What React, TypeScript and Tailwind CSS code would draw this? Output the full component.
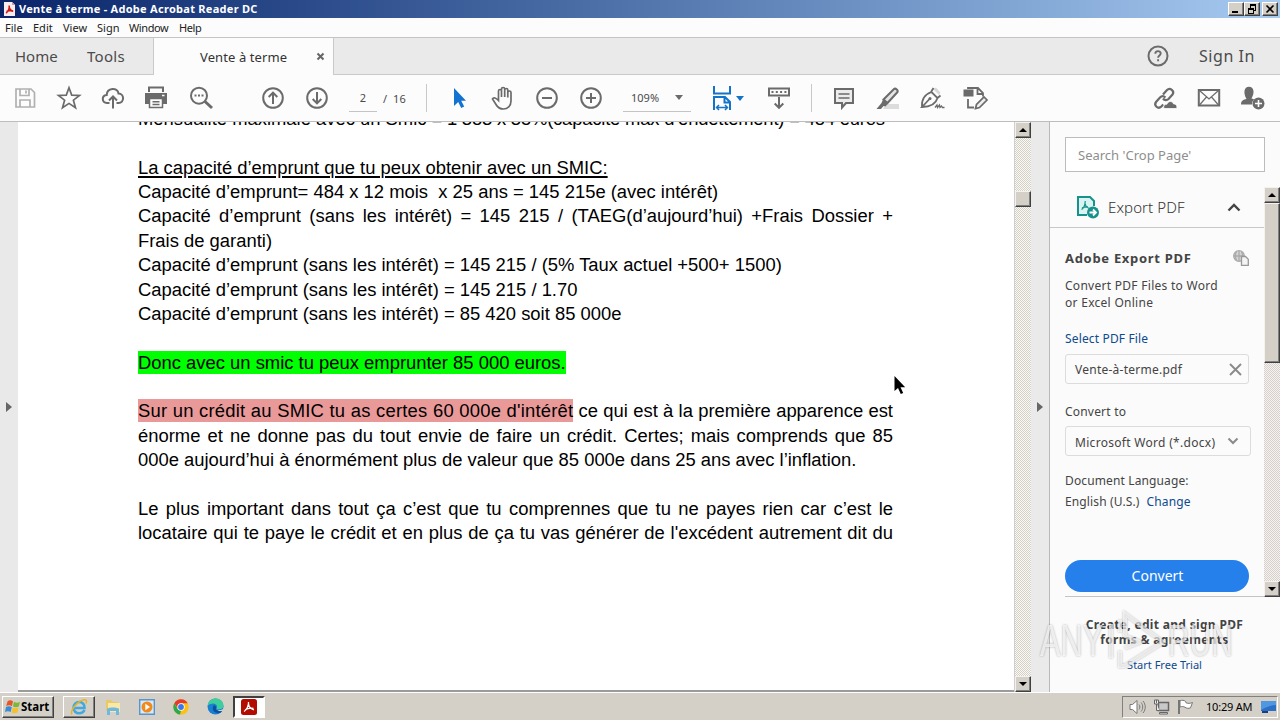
import type { ReactNode } from "react";

type IconProps = { children: ReactNode; w?: number; h?: number; vb?: string; className?: string };

function Icon({ children, w = 26, h = 26, vb = "0 0 26 26", className = "" }: IconProps) {
  return (
    <svg width={w} height={h} viewBox={vb} fill="none" stroke="#6b6b6b" strokeWidth="2" className={"shrink-0 " + className}>
      {children}
    </svg>
  );
}

function Slot({ children }: { children: ReactNode }) {
  return <div className="flex w-11 shrink-0 items-center justify-center">{children}</div>;
}

const raised = "border border-t-[#f4f2ee] border-r-[#404040] border-b-[#404040] border-l-[#f4f2ee] bg-[#d4d0c8] shadow-[inset_-1px_-1px_0_#808080]";

function ScrollButton({ down = false }: { down?: boolean }) {
  return (
    <div className={"flex h-4 w-full shrink-0 items-center justify-center " + raised}>
      <svg width="8" height="4" viewBox="0 0 8 4">
        <path d={down ? "M0 0h8L4 4z" : "M0 4h8L4 0z"} fill="#000" />
      </svg>
    </div>
  );
}

function WinButton({ children }: { children: ReactNode }) {
  return (
    <div className="flex h-[14px] w-4 items-center justify-center border border-t-white border-r-[#404040] border-b-[#404040] border-l-white bg-[#d4d0c8] shadow-[inset_-1px_-1px_0_#808080]">
      <svg width="14" height="12" viewBox="0 0 14 12" fill="none" stroke="#000" shapeRendering="crispEdges">
        {children}
      </svg>
    </div>
  );
}

function Line({ children, justify = false }: { children?: ReactNode; justify?: boolean }) {
  return (
    <p className={"h-[24.37px] w-[755px] leading-[24.37px] whitespace-pre" + (justify ? " [text-align-last:justify]" : "")}>{children}</p>
  );
}

function TitleBar() {
  return (
    <header className="flex h-[18px] shrink-0 items-center bg-linear-to-r from-[#0a246a] to-[#a6caf0] pr-[2px] pl-1">
      <svg width="11" height="14" viewBox="0 0 11 14" className="mr-1">
        <path d="M0 0h8l3 3v11H0z" fill="#f7eded" />
        <path d="M8 0l3 3H8z" fill="#d99" />
        <path d="M2 11c2-1 3.500-4.500 3.200-7.500M5.200 5c.5 2.500 2 4 4 4.300M2.500 9.500c2-.8 4-1.200 6-.8" stroke="#d11414" strokeWidth="1.500" fill="none" />
      </svg>
      <h1 className="-mt-px grow text-[11px] leading-none font-bold tracking-[0.28px] text-white">Vente à terme - Adobe Acrobat Reader DC</h1>
      <div className="flex">
        <WinButton><path d="M3 9h6" strokeWidth="2" /></WinButton>
        <WinButton>
          <path d="M5 2h6" strokeWidth="2" />
          <path d="M5.500 2v3M10.500 2v5.500H8M3.500 5v5.500h5V5" />
          <path d="M3 5.500h6" strokeWidth="2" />
        </WinButton>
        <div className="w-[2px]" />
        <WinButton><path d="M3.500 2.500l7 7M10.500 2.500l-7 7" strokeWidth="1.600" shapeRendering="auto" /></WinButton>
      </div>
    </header>
  );
}

function MenuBar() {
  return (
    <nav className="flex h-[19px] shrink-0 items-center bg-[#fcfcfc] pl-[5px] text-[11px] leading-none text-[#222]">
      <span className="w-7">File</span>
      <span className="w-[30px]">Edit</span>
      <span className="w-[34px]">View</span>
      <span className="w-8">Sign</span>
      <span className="w-[50px] tracking-[-0.4px]">Window</span>
      <span className="tracking-[-0.4px]">Help</span>
    </nav>
  );
}

function TabBar() {
  return (
    <div className="flex h-[38px] shrink-0 border-t border-[#c4c4c4] bg-[#eaeaea] leading-none text-[#4b4b4b]">
      <div className="flex w-[154px] items-center border-r border-b border-[#cacaca] pl-[15px] text-[15px]">
        <span className="w-[72px]">Home</span>
        <span className="tracking-[0.3px]">Tools</span>
      </div>
      <div className="flex w-[179px] items-center bg-[#fcfcfc] pt-px pl-[46px] text-[13px] text-[#333]">
        <span className="w-[116px] tracking-[0.1px]">Vente à terme</span>
        <svg width="9" height="9" viewBox="0 0 9 9" stroke="#666" strokeWidth="2" className="-mt-px"><path d="M1.500 1.500l6 6M7.500 1.500l-6 6" /></svg>
      </div>
      <div className="flex grow items-center justify-end border-b border-l border-[#cacaca] pr-[25px]">
        <Icon w={22} h={22} vb="0 0 22 22" className="mr-[30px]">
          <circle cx="11" cy="11" r="9.500" />
          <path d="M8.300 8.800c0-3.600 5.400-3.400 5.400-.3 0 1.900-2.600 2-2.600 4.200M11.100 14.300v2" strokeWidth="1.900" />
        </Icon>
        <span className="text-[16px] tracking-[0.55px]">Sign In</span>
      </div>
    </div>
  );
}

function Toolbar() {
  return (
    <div className="flex h-[47px] shrink-0 items-center border-b border-[#bdbdbd] bg-[#fcfcfc] pl-[3px] leading-none text-[#4b4b4b]">
      <Slot>
        <Icon>
          <path d="M4 4h15l3.500 3.500V22H4zM8 4v6.500h9V4M14 5.500v3M8 22v-7h10v7" stroke="#b0b0b0" strokeWidth="1.700" />
        </Icon>
      </Slot>
      <Slot>
        <Icon><path d="M13 2.800l2.700 7.300 7.800.3-6.100 4.800 2.100 7.500-6.500-4.300-6.500 4.300 2.100-7.500-6.100-4.800 7.800-.3z" strokeWidth="1.700" /></Icon>
      </Slot>
      <Slot>
        <Icon>
          <path d="M9.500 18H7c-5.500-.3-5.600-7.500-.3-8C7 2.500 17.500 2 18.500 8.500c6.200.3 6 9.300 0 9.500h-2M13 23.500V12M9 15.500l4-4 4 4" />
        </Icon>
      </Slot>
      <Slot>
        <Icon className="-ml-[2px]">
          <path d="M6 7V2.500h14V7" />
          <path d="M2 8h22v11h-4v-4H6v4H2z" fill="#6b6b6b" stroke="none" />
          <path d="M6.500 13.500h13v9h-13z" fill="#fcfcfc" strokeWidth="1.500" />
          <path d="M9.500 16.700h7M9.500 19.500h7" strokeWidth="1.400" />
          <path d="M19 10.500h2.500" stroke="#fcfcfc" strokeWidth="1.500" />
        </Icon>
      </Slot>
      <Slot>
        <Icon>
          <circle cx="11" cy="10.700" r="8" />
          <path d="M17 16.500l7 6.500" strokeWidth="3" />
          <path d="M6.500 10.500h2M10 10.500h2M13.500 10.500h2" />
        </Icon>
      </Slot>
      <div className="w-7" />
      <Slot><Icon><circle cx="13" cy="13" r="9.800" /><path d="M13 19V7.500M8.700 12L13 7.600l4.300 4.400" /></Icon></Slot>
      <Slot><Icon><circle cx="13" cy="13" r="9.800" /><path d="M13 7v11.500M8.700 14l4.300 4.400 4.300-4.400" /></Icon></Slot>
      <div className="ml-[10px] flex h-7 w-7 items-center justify-center border-b border-[#c4c4c4] text-[11px]">2</div>
      <div className="w-[49px] pl-[6px] text-[11px] tracking-[0.1px]">/&nbsp; 16</div>
      <div className="h-7 w-px bg-[#c8c8c8]" />
      <div className="w-[10px]" />
      <Slot>
        <svg width="26" height="26" viewBox="0 0 26 26"><path d="M8 3v18l4.200-4 3 6 3-1.500-3-5.700H20z" fill="#1473d0" /></svg>
      </Slot>
      <Slot>
        <Icon>
          <path d="M8.500 15.500V6c0-2 3-2 3 0v6V4c0-2 3.200-2 3.200 0v8V5c0-2 3.100-2 3.100 0v7.500V7.500c0-2 3.200-2 3.200 0V16c0 5-3.500 8-7.500 8-3.500 0-6-1.800-7.500-4.500L2.500 14c1-2 3.500-1.200 6 1.500z" strokeWidth="1.700" />
        </Icon>
      </Slot>
      <Slot><Icon><circle cx="13" cy="13" r="9.800" /><path d="M8 13h10" /></Icon></Slot>
      <Slot><Icon><circle cx="13" cy="13" r="9.800" /><path d="M8 13h10M13 8v10" /></Icon></Slot>
      <div className="ml-[10px] flex h-7 w-[68px] items-center border-b border-[#c4c4c4] pl-2 text-[11px]">
        <span className="w-[44px]">109%</span>
        <svg width="8" height="5" viewBox="0 0 8 5"><path d="M0 0h8L4 5z" fill="#6b6b6b" /></svg>
      </div>
      <div className="ml-[20px] flex items-center gap-[3px]">
        <Icon w={22} className="!stroke-[#1473c8]" vb="0 0 22 26">
          <path d="M3 1v7.500h16V1M3 25V12h11l5 5v8M13.500 12v5.500H19" />
          <path d="M6 22.500h10M8 20l-2.500 2.500L8 25M14 20l2.500 2.500L14 25" strokeWidth="1.500" />
        </Icon>
        <svg width="8" height="5" viewBox="0 0 8 5"><path d="M0 0h8L4 5z" fill="#1473c8" /></svg>
      </div>
      <div className="w-[13px]" />
      <Slot>
        <Icon>
          <path d="M3 3.500h20v7H3zM13 12v11M8.700 18.500L13 22.800l4.300-4.300" />
          <path d="M5.500 7h15" strokeDasharray="2 2.300" />
        </Icon>
      </Slot>
      <div className="w-[10px]" />
      <div className="h-7 w-px bg-[#c8c8c8]" />
      <div className="w-[10px]" />
      <Slot>
        <Icon><path d="M4 4h18v14h-7l-4 4.500V18H4z" fill="#ececec" /><path d="M7.500 9h11M7.500 13h11" strokeWidth="1.700" /></Icon>
      </Slot>
      <Slot>
        <Icon>
          <path d="M11 19h13v5H8z" fill="#dcdcdc" stroke="none" />
          <path d="M8.500 14.500L19 4c1.500-1.300 4.700 1.500 3.300 3.300L12.500 18z" fill="#e4e4e4" />
          <path d="M8 14.500l5 4-2.500 3-2-.5-2.500 3H1.500L6.500 18z" fill="#6b6b6b" stroke="none" />
        </Icon>
      </Slot>
      <Slot>
        <Icon>
          <path d="M14 4l6 6 1.500-2.500L17 2.500z" fill="#d8d8d8" stroke="none" />
          <path d="M3 22c-.5-6 1-12 9.500-15l6 6c-2 7-9 9-15.500 9l7.500-8M12 7l2.500-4M18.500 13l3-2.500" strokeWidth="1.800" />
          <circle cx="11" cy="13.500" r="1.500" fill="#6b6b6b" stroke="none" />
          <path d="M16 22.500l2-2.500.5 2.500 2-2.500.5 2.500 1.500-1.500 1 1.500h2" strokeWidth="1.300" />
        </Icon>
      </Slot>
      <Slot>
        <Icon>
          <path d="M1.500 5.500h8v5h-8z" fill="#6b6b6b" />
          <path d="M5 4V3h10l5 5v3.500M14.500 3.500V9H20M5 14v8.500h6" strokeWidth="1.800" />
          <path d="M12.500 23.500l1-4L21 12l3 3-7.500 7.500z" fill="#eee" strokeWidth="1.700" />
        </Icon>
      </Slot>
      <div className="grow" />
      <Slot>
        <Icon>
          <path d="M11 9.500l4-4.500c3-3 8 1 5.500 4.500l-4 4.500c-1.500 1.500-4 1.500-5.500-.5" strokeWidth="2.200" />
          <path d="M13.500 12.500c-2-1.800-4-1.500-5.500 0l-4 4.500c-2.500 3.500 2 7.500 5.200 4.700l2-2.200" strokeWidth="2.200" />
          <path d="M12 23.500c-1-3 1-4.500 3-4.300 1-3.500 5.500-3.500 6.500-.3 3 0 4 2.500 3 4.600z" fill="#6b6b6b" stroke="#fcfcfc" strokeWidth="0.800" />
        </Icon>
      </Slot>
      <Slot>
        <Icon><path d="M2.800 5h20.400v15.500H2.800z" /><path d="M3.500 5.500L13 14l9.500-8.500M3.500 20l7-8M22.500 20l-7-8" strokeWidth="1.200" /></Icon>
      </Slot>
      <Slot>
        <Icon>
          <path d="M1 19.500c0-4 2.500-4.800 5.500-5.500C3 8 4 1.800 9 1.800S15 8 11.500 13.500c1.500.5 2 .5 2.500 1-1.500 1.500-2 3-2 5z" fill="#6b6b6b" stroke="none" />
          <circle cx="18.500" cy="18.500" r="6" fill="#6b6b6b" stroke="none" />
          <path d="M15 18.500h7M18.500 15v7" stroke="#fcfcfc" strokeWidth="1.600" />
        </Icon>
      </Slot>
      <div className="w-[5px]" />
    </div>
  );
}

function Document() {
  return (
    <main className="relative w-[996px] shrink-0 overflow-hidden border-b-2 border-[#9b9b9b] bg-white">
      <div className="-mt-[15px] ml-[120px] font-['Liberation_Sans',sans-serif] text-[18.420px] text-black">
        <Line>Mensualité maximale avec un Smic<span className="tracking-[-0.19px]"> = 1 383 x 35%(capacité max d’endettement) = 484 euros</span></Line>
        <Line />
        <Line><span className="underline decoration-[1.500px] underline-offset-[2px]">La capacité d’emprunt que tu peux obtenir avec un SMIC:</span></Line>
        <Line>Capacité d’emprunt= 484 x 12 mois  x 25 ans = 145 215e (avec intérêt)</Line>
        <Line justify>Capacité d’emprunt (sans les intérêt) = 145 215 / (TAEG(d’aujourd’hui) +Frais Dossier +</Line>
        <Line>Frais de garanti)</Line>
        <Line>Capacité d’emprunt (sans les intérêt) = 145 215 / (5% Taux actuel +500+ 1500)</Line>
        <Line>Capacité d’emprunt (sans les intérêt) = 145 215 / 1.70</Line>
        <Line>Capacité d’emprunt (sans les intérêt) = 85 420 soit 85 000e</Line>
        <Line />
        <Line><span className="bg-[#00ff00] py-px">Donc avec un smic tu peux emprunter 85 000 euros.</span></Line>
        <Line />
        <Line justify><span className="bg-[#ea9999] py-px tracking-[0.2px]">Sur un crédit au SMIC tu as certes 60 000e d'intérêt</span> ce qui est à la première apparence est</Line>
        <Line justify>énorme et ne donne pas du tout envie de faire un crédit. Certes; mais comprends que 85</Line>
        <Line>000e aujourd’hui à énormément plus de valeur que 85 000e dans 25 ans avec l’inflation.</Line>
        <Line />
        <Line justify>Le plus important dans tout ça c’est que tu comprennes que tu ne payes rien car c’est le</Line>
        <Line justify>locataire qui te paye le crédit et en plus de ça tu vas générer de l'excédent autrement dit du</Line>
      </div>
      <svg width="12" height="20" viewBox="0 0 12 20" className="absolute top-[254px] left-[876px]">
        <path d="M0.500 0v15l3.500-3 2.800 6 2.400-1-2.700-5.800h4.700z" fill="#000" />
      </svg>
    </main>
  );
}

function SidePanel() {
  return (
    <aside className="flex w-[231px] shrink-0 flex-col border-l border-[#b9b9b9] bg-[#fbfbfb] pl-[15px] text-[12px] leading-none text-[#444]">
      <div className="mt-[15px] flex h-[35px] w-[200px] shrink-0 items-center border border-[#bcbcbc] bg-white pt-px pl-3 text-[13px] text-[#8e8e8e]">Search 'Crop Page'</div>
      <div className="mt-[15px] flex h-[410px] shrink-0">
        <div className="flex w-[199px] flex-col border-b border-[#c4c4c4]">
          <div className="-ml-[15px] flex h-[41px] shrink-0 items-center border-b border-[#c9c9c9] pl-[26px]">
            <svg width="24" height="24" viewBox="0 0 24 24" fill="none" stroke="#16918c" strokeWidth="2">
              <path d="M11 20H2V2h12l4 4v5" fill="#d9f3f2" />
              <path d="M5.500 14.500c2-1 4-5 3.700-8.500M9.300 9c.5 2.500 2 4 4.500 4.300M6 12.800c2-.7 4-1 6-.9" strokeWidth="1.200" />
              <circle cx="17" cy="17.500" r="6" fill="#16918c" stroke="none" />
              <path d="M13.500 17.500h6M17 14.500l3 3-3 3" stroke="#fff" strokeWidth="1.800" />
            </svg>
            <span className="ml-2 w-[119px] text-[15px] font-light tracking-[0.1px] text-[#333]">Export PDF</span>
            <svg width="14" height="9" viewBox="0 0 14 9" fill="none" stroke="#444" strokeWidth="2.400"><path d="M1.500 7.500L7 2l5.500 5.500" /></svg>
          </div>
          <div className="mt-[21px] flex h-[18px] shrink-0 items-center">
            <strong className="w-[168px] text-[13px] tracking-[0.7px]">Adobe Export PDF</strong>
            <svg width="16" height="16" viewBox="0 0 16 16" fill="none" stroke="#aaa" strokeWidth="1.300">
              <circle cx="6" cy="6" r="5.300" fill="#d6d6d6" /><path d="M1 6h10M6 1v10M3.500 2c-1.500 2.500-1.500 5.500 0 8M8.500 2c1.500 2.500 1.500 5.500 0 8" />
              <path d="M8.500 6.500h4l2.800 2.800v6H8.500z" fill="#f4f4f4" stroke="#999" />
            </svg>
          </div>
          <p className="mt-[10px] leading-[17px] tracking-[0.28px]">Convert PDF Files to Word<br />or Excel Online</p>
          <p className="mt-[19px] h-[17px] leading-[17px] tracking-[0.15px] text-[#0d4a8f]">Select PDF File</p>
          <div className="mt-[7px] flex h-[30px] w-[184px] shrink-0 items-center rounded-[3px] border border-[#dcdcdc] pt-[2px] pl-[9px]">
            <span className="w-[154px] tracking-[0.25px]">Vente-à-terme.pdf</span>
            <svg width="13" height="13" viewBox="0 0 13 13" stroke="#8a8a8a" strokeWidth="1.900" className="-mt-px"><path d="M1 1l11 11M12 1L1 12" /></svg>
          </div>
          <p className="mt-[19px] h-[17px] leading-[17px] tracking-[0.2px]">Convert to</p>
          <div className="mt-[6px] flex h-[30px] w-[186px] shrink-0 items-center rounded-[3px] border border-[#dcdcdc] pt-[3px] pl-[9px]">
            <span className="w-[152px] whitespace-nowrap tracking-[0.3px]">Microsoft Word (*.docx)</span>
            <svg width="12" height="8" viewBox="0 0 12 8" fill="none" stroke="#8a8a8a" strokeWidth="2" className="-mt-[4px]"><path d="M1.500 1.500L6 6l4.500-4.500" /></svg>
          </div>
          <p className="mt-[14px] leading-[21px] tracking-[0.13px]">Document Language:<br />English (U.S.)<span className="ml-[7px] text-[#0d4a8f]">Change</span></p>
          <div className="mt-auto mb-1 flex h-8 w-[184px] shrink-0 items-center justify-center rounded-full bg-[#2680eb] pl-px text-[14px] text-white">Convert</div>
        </div>
        <div className="flex w-4 flex-col bg-[repeating-conic-gradient(#d6d0cc_0%_25%,#f6f2f0_0%_50%)] bg-[length:2px_2px]">
          <ScrollButton />
          <div className={"h-[160px] " + raised} />
          <div className="grow" />
          <ScrollButton down />
        </div>
      </div>
      <div className="mt-[20px] flex w-[199px] flex-col items-center text-center">
        <strong className="text-[12px] leading-[15px] tracking-[0.32px] whitespace-nowrap">Create, edit and sign PDF<br />forms &amp; agreements</strong>
        <span className="mt-[12px] text-[11px] text-[#0d4a8f]">Start Free Trial</span>
      </div>
    </aside>
  );
}

function Watermark() {
  return (
    <div className="pointer-events-none absolute top-[609px] left-[1040px] flex h-[64px] items-center font-['Liberation_Sans',sans-serif] text-[44px] leading-none text-white/70 [filter:drop-shadow(0_0_1px_rgba(0,0,0,0.4))]">
      <span className="w-[66px] origin-left scale-x-[0.7]">ANY</span>
      <svg width="62" height="64" viewBox="0 0 62 64" fill="none" stroke="#ffffffa0" strokeWidth="4">
        <path d="M5 15v34M14 11v12M14 42v15h5L57 33 19 5v22l15 6-15 6" />
      </svg>
      <span className="origin-left scale-x-[0.68]">RUN</span>
    </div>
  );
}

function Taskbar() {
  return (
    <footer className="flex h-[28px] shrink-0 items-center border-t border-white bg-[#d4d0c8] pr-[2px] pl-[2px] text-[11px] leading-none">
      <div className="flex h-[22px] w-[52px] items-center border border-t-white border-r-[#404040] border-b-[#404040] border-l-white pl-[2px] shadow-[inset_-1px_-1px_0_#808080]">
        <svg width="16" height="16" viewBox="0 0 16 16">
          <path d="M2.500 2.500C4 1 6 1 8 2.200L7 7C5 6 3 6 1.200 7z" fill="#e5572a" />
          <path d="M9 2.700c2 1.200 4 1.300 6 0L13.800 7.500c-2 1-4 1-5.900 0z" fill="#7db73a" />
          <path d="M1 8c2-1 4-1 5.800 0l-1.100 5C4 12 2 12 0 13z" fill="#3b8bd4" />
          <path d="M7.700 8.500c2 1 4 1 5.900 0l-1.200 5c-2 1-4 1-5.800 0z" fill="#f5c02c" />
        </svg>
        <span className="text-[11.500px] font-bold">Start</span>
      </div>
      <div className="ml-[9px] flex h-[22px] w-8 items-center justify-center border border-t-white border-r-[#404040] border-b-[#404040] border-l-white shadow-[inset_-1px_-1px_0_#808080]">
        <svg width="18" height="18" viewBox="0 0 18 18" fill="none">
          <path d="M14.500 12c-1 2-3 3.300-5.300 3.300C6 15.300 3.500 13 3.500 9.700S6 4 9.200 4s5.600 2.500 5.300 6H5" stroke="#3fa9e0" strokeWidth="2.600" />
          <path d="M2 16.500C-.5 13 8 2.500 14 1.700c2.500-.2 3 1.500 2 3.800" stroke="#e8b422" strokeWidth="1.500" />
        </svg>
      </div>
      <svg width="18" height="18" viewBox="0 0 18 18" className="ml-[9px]">
        <path d="M2 2h5l1.500 2H14v9H2z" fill="#e9c866" />
        <path d="M4 5h12v9H4z" fill="#f8e9a8" />
        <path d="M3 10.500c3-1.500 9-1.500 12 0V17h-3v-4H6v4H3z" fill="#6fb8e0" />
      </svg>
      <svg width="16" height="16" viewBox="0 0 16 16" className="ml-[17px]">
        <path d="M.7.7h14.600v14.600H.7z" fill="#d8e9f8" stroke="#5795cf" strokeWidth="1.400" />
        <circle cx="8" cy="8" r="5.500" fill="#f08a1c" />
        <path d="M6.300 4.800L11 8l-4.700 3.200z" fill="#fff" />
      </svg>
      <svg width="16" height="16" viewBox="0 0 16 16" className="ml-[18px]">
        <circle cx="8" cy="8" r="7.700" fill="#fbc116" />
        <path d="M1.300 4.200A7.700 7.700 0 0 1 14.700 4.200H8L5 9.800z" fill="#e33b2e" />
        <path d="M1.300 4.200L4.700 10 8 11.500 7 15.600A7.700 7.700 0 0 1 1.300 4.200z" fill="#2da94f" />
        <circle cx="8" cy="8" r="3.700" fill="#fff" /><circle cx="8" cy="8" r="2.900" fill="#3b78e7" />
      </svg>
      <svg width="17" height="17" viewBox="0 0 17 17" className="ml-[18px]">
        <circle cx="8.500" cy="8.500" r="8" fill="#1a7fd0" />
        <path d="M.7 7.500C1.500 2.500 5 .5 8.500.5c5 0 8 3.500 8 7 0 3-2.500 4-5 3.800-2-.2-2-1.300-1.300-2C10.500 5 4.500 4 .7 7.500z" fill="#3ccf9c" />
        <path d="M7 7c-3 4 0 8.500 5 8 1.500-.3 2.500-1 3-2-3 1-6.500-.7-6-4.500z" fill="#0c4f9e" />
        <path d="M9.500 8.500c-1 1.500 0 3.500 2.500 3.500 2 0 3.500-.5 4.500-1.500v2.500h-4C9 12 8.500 10 9.500 8.500z" fill="#d4d0c8" />
      </svg>
      <div className="ml-[9px] flex h-[22px] w-8 items-center justify-center border-2 border-t-[#404040] border-r-white border-b-white border-l-[#404040] bg-white">
        <svg width="16" height="16" viewBox="0 0 16 16" fill="none">
          <rect width="16" height="16" rx="2.500" fill="#b30b00" />
          <path d="M3 12.500C5.500 11 8 6.500 7.500 3M7.500 4.500c0 3 2.500 5.800 5.500 6.300M4 10.800c3-1.600 6-2 8.500-1.300" stroke="#fff" strokeWidth="1.300" />
        </svg>
      </div>
      <div className="grow" />
      <div className="flex h-[22px] w-[156px] items-center border border-t-[#808080] border-r-white border-b-white border-l-[#808080] pl-[6px]">
        <svg width="17" height="16" viewBox="0 0 17 16" fill="none" stroke="#777">
          <path d="M1 5.500h2.500L8 1.500v13l-4.500-4H1z" fill="#fff" /><path d="M10 5.500c1.200 1.500 1.200 3.500 0 5M12 3.500c2.300 2.500 2.300 6.500 0 9M14 2c3 3.500 3 8.500 0 12" />
        </svg>
        <svg width="17" height="16" viewBox="0 0 17 16" fill="none" stroke="#666" className="ml-[7px]">
          <path d="M5.500 3.500h10v8h-10z" fill="#c9c9c9" strokeWidth="1.500" /><path d="M6.500 13.500h8v1.500h-8z" fill="#eee" />
          <path d="M1.500 1h4v4h-4zM3.500 5v6.500h3M3.500 1v3" fill="#eee" />
        </svg>
        <svg width="17" height="16" viewBox="0 0 17 16" fill="none" stroke="#777" className="ml-[7px]">
          <path d="M2.500 1v14M1.500 1v14" /><path d="M3 1.800c2-1 4-.5 5.500.5l.5 1.500c2 .8 4 .8 6.500-.3l-2 5.300c-2 1-4 .5-5.500-.5-1.500-1-3-1-5-.3z" fill="#fff" />
        </svg>
        <span className="ml-[12px] w-[55px] whitespace-nowrap tracking-[-0.200px]">10:29 AM</span>
        <svg width="15" height="14" viewBox="0 0 15 14">
          <path d="M0 1h15v10H0z" fill="#2c6fc4" /><path d="M0 1h15v4C10 5 5 7 0 10z" fill="#4f97e0" /><path d="M1 11h6v2H1z" fill="#1b3f7d" />
        </svg>
      </div>
    </footer>
  );
}

export default function App() {
  return (
    <div className="relative flex h-[720px] w-[1280px] flex-col overflow-hidden bg-[#fcfcfc] font-['Noto_Sans','Open_Sans',sans-serif]">
      <TitleBar />
      <MenuBar />
      <TabBar />
      <Toolbar />
      <div className="flex h-[570px] shrink-0">
        <div className="flex w-[18px] shrink-0 items-center bg-[#e9e9e9] pl-[6px]">
          <svg width="6" height="10" viewBox="0 0 6 10"><path d="M0 0l6 5-6 5z" fill="#666" /></svg>
        </div>
        <Document />
        <div className="flex w-[17px] shrink-0 flex-col border-l border-[#cfcfcf] bg-[repeating-conic-gradient(#d4d0c8_0%_25%,#fafaf4_0%_50%)] bg-[length:2px_2px]">
          <ScrollButton />
          <div className="h-[53px]" />
          <div className={"h-4 w-full shrink-0 " + raised} />
          <div className="grow" />
          <ScrollButton down />
        </div>
        <div className="flex w-[18px] shrink-0 items-center bg-[#eaeaea] pl-[6px]">
          <svg width="6" height="10" viewBox="0 0 6 10"><path d="M0 0l6 5-6 5z" fill="#666" /></svg>
        </div>
        <SidePanel />
      </div>
      <Taskbar />
      <Watermark />
    </div>
  );
}
